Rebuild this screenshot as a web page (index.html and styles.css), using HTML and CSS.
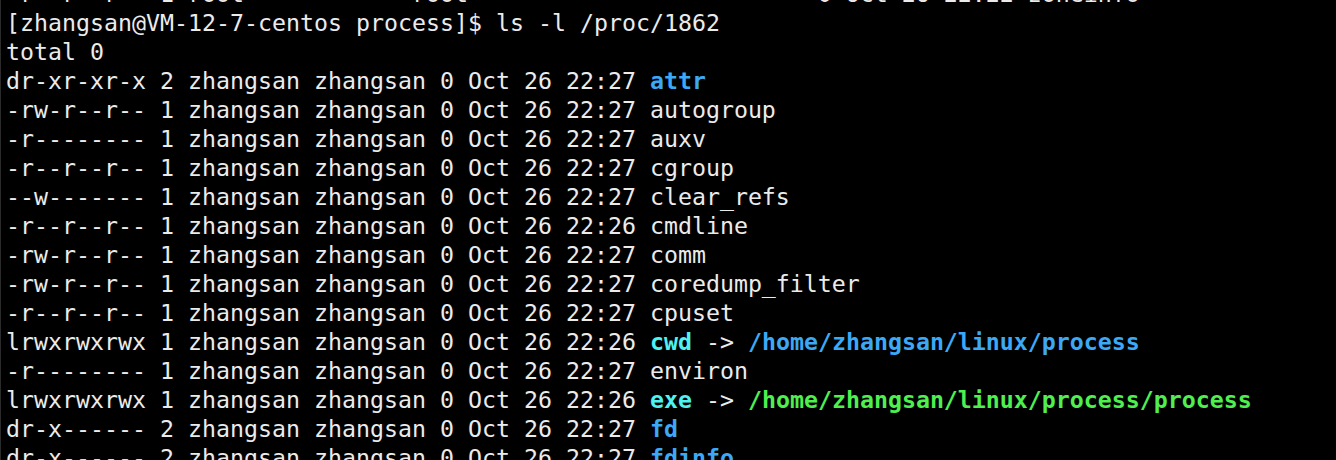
FILE: index.html
```html
<!DOCTYPE html>
<html lang="en">
<head>
<meta charset="utf-8">
<title>terminal</title>
<link rel="stylesheet" href="styles.css">
</head>
<body>
<div class="term">
<div class="line"><span class="seg">-r--r--r-- 1 root</span><span class="seg">root</span>0 Oct 26 22:22 zoneinfo</div>
<div class="line">[zhangsan@VM-12-7-centos process]$ ls -l /proc/1862</div>
<div class="line">total 0</div>
<div class="line">dr-xr-xr-x 2 zhangsan zhangsan 0 Oct 26 22:27 <span class="dir">attr</span></div>
<div class="line">-rw-r--r-- 1 zhangsan zhangsan 0 Oct 26 22:27 autogroup</div>
<div class="line">-r-------- 1 zhangsan zhangsan 0 Oct 26 22:27 auxv</div>
<div class="line">-r--r--r-- 1 zhangsan zhangsan 0 Oct 26 22:27 cgroup</div>
<div class="line">--w------- 1 zhangsan zhangsan 0 Oct 26 22:27 clear_refs</div>
<div class="line">-r--r--r-- 1 zhangsan zhangsan 0 Oct 26 22:26 cmdline</div>
<div class="line">-rw-r--r-- 1 zhangsan zhangsan 0 Oct 26 22:27 comm</div>
<div class="line">-rw-r--r-- 1 zhangsan zhangsan 0 Oct 26 22:27 coredump_filter</div>
<div class="line">-r--r--r-- 1 zhangsan zhangsan 0 Oct 26 22:27 cpuset</div>
<div class="line">lrwxrwxrwx 1 zhangsan zhangsan 0 Oct 26 22:26 <span class="link">cwd</span> -&gt; <span class="dir">/home/zhangsan/linux/process</span></div>
<div class="line">-r-------- 1 zhangsan zhangsan 0 Oct 26 22:27 environ</div>
<div class="line">lrwxrwxrwx 1 zhangsan zhangsan 0 Oct 26 22:26 <span class="link">exe</span> -&gt; <span class="exec">/home/zhangsan/linux/process/process</span></div>
<div class="line">dr-x------ 2 zhangsan zhangsan 0 Oct 26 22:27 <span class="dir">fd</span></div>
<div class="line">dr-x------ 2 zhangsan zhangsan 0 Oct 26 22:27 <span class="dir">fdinfo</span></div>
</div>
</body>
</html>
```

FILE: styles.css
```css
html, body {
  margin: 0;
  padding: 0;
  background: #000;
  overflow: hidden;
}

body {
  width: 1336px;
  height: 460px;
}

.term {
  margin-top: -21.5px;
  padding-left: 5px;
  border-left: 1px solid #2b2b2b;
  height: 484px;
  box-sizing: border-box;
  font-family: "DejaVu Sans Mono", "Liberation Mono", monospace;
  font-size: 23.25px;
  line-height: 29px;
  color: #ebebeb;
}

.line {
  white-space: pre;
  height: 29px;
}

.seg {
  display: inline-block;
  width: 29ch;
}

.dir {
  color: #3ca9f6;
  font-weight: bold;
}

.link {
  color: #4ff2f2;
  font-weight: bold;
}

.exec {
  color: #4eef4e;
  font-weight: bold;
}
```
